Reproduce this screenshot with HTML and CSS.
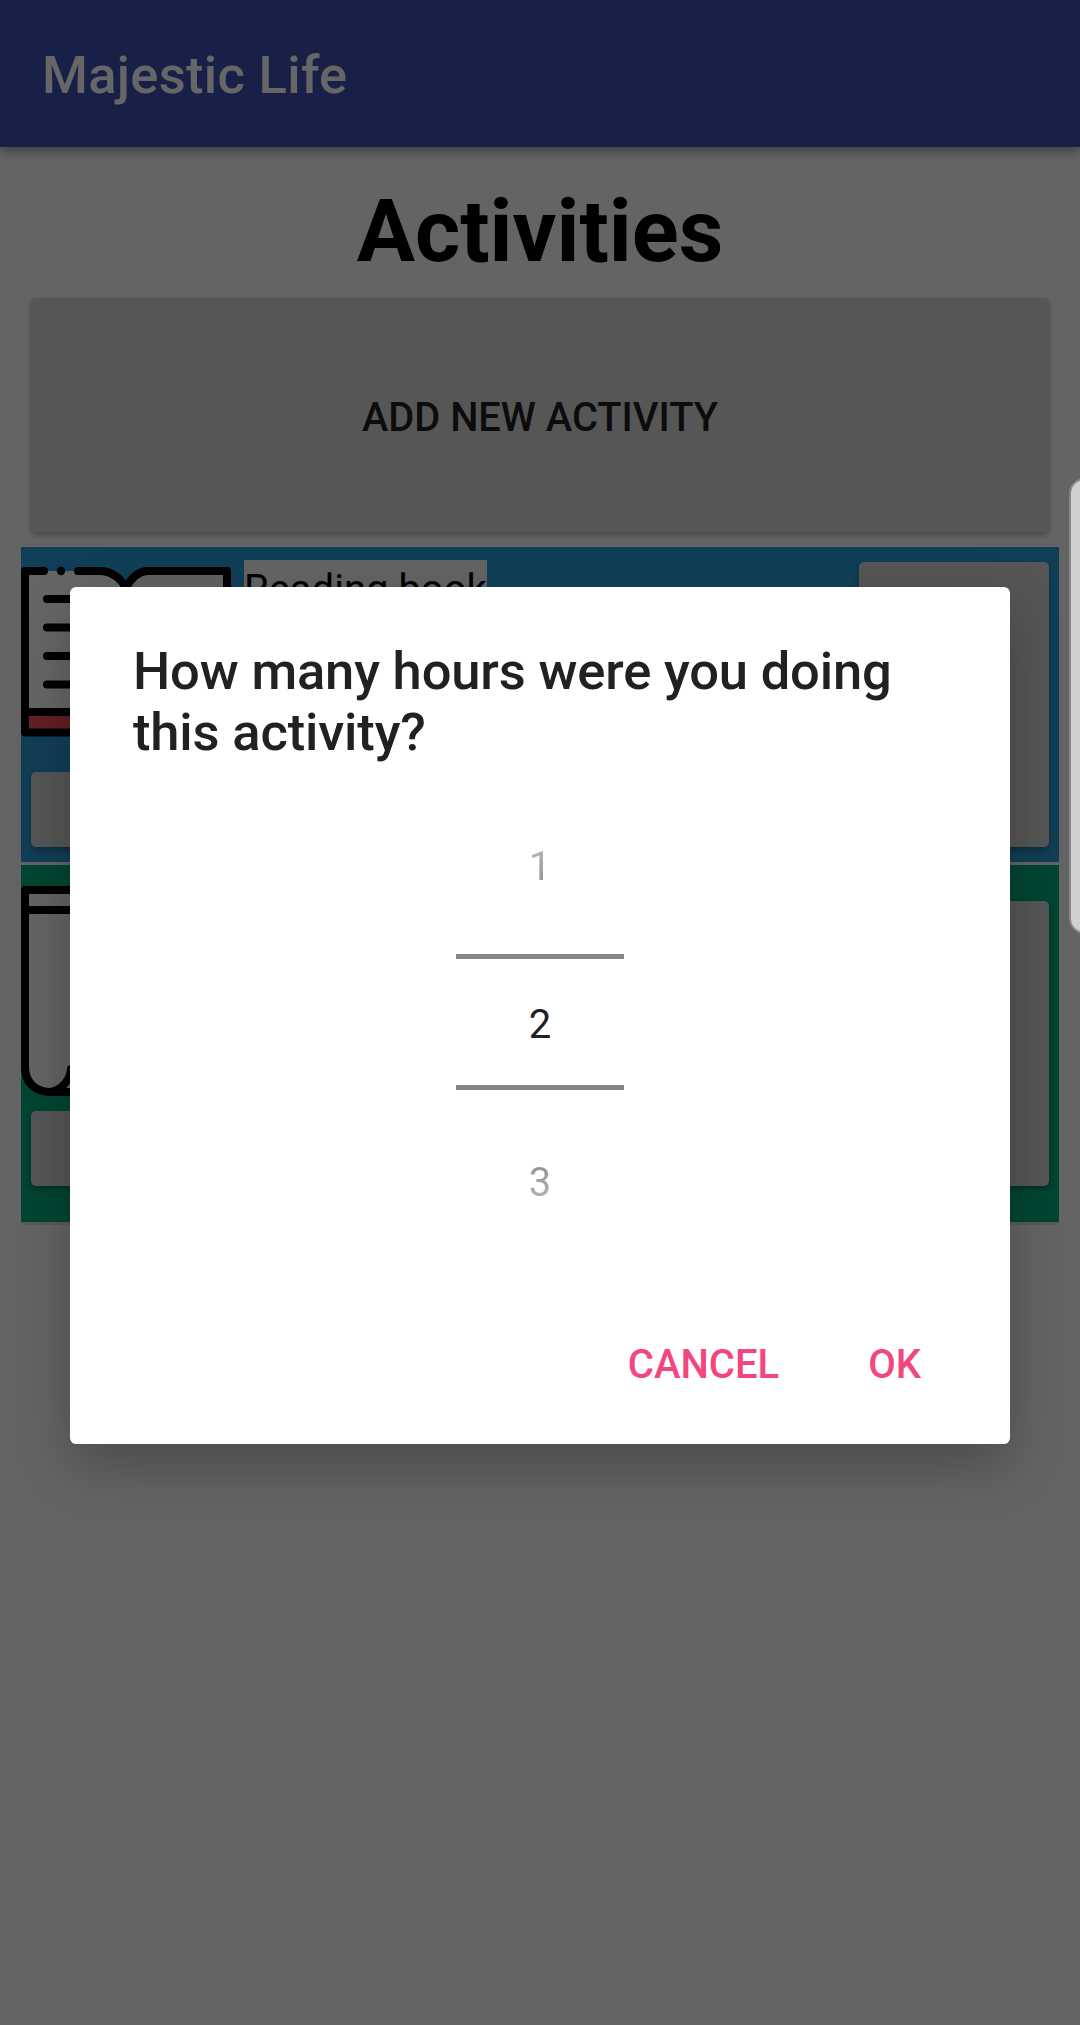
FILE: index.html
```html
<!DOCTYPE html>
<html lang="en">
<head>
<meta charset="utf-8">
<title>Majestic Life</title>
<link rel="stylesheet" href="styles.css">
</head>
<body>
<div class="screen">
  <header class="app-bar">Majestic Life</header>
  <main class="content">
    <h1 class="heading">Activities</h1>
    <button class="btn add-btn">ADD NEW ACTIVITY</button>
    <section class="activity activity-reading">
      <div class="activity-main">
        <div class="activity-info">
          <svg class="activity-icon" viewBox="0 0 210 210">
            <path d="M4 24H80Q96 25 106 39Q114 25 132 24H206V185H4Z" fill="#fff"/>
            <path d="M106 39Q114 25 132 24H206V167H106Z" fill="#f3f0f5"/>
            <path d="M4 167H206V185H4Z" fill="#f4525a"/>
            <g fill="none" stroke="#000" stroke-width="8" stroke-linecap="round" stroke-linejoin="round">
              <path d="M23 24H4V185.500H206V24H126Q113 25 105 41Q96 25 80 24H57M4 165H206M105 41V165"/>
              <path d="M26 52H80M26 80.500H80M26 109H80M26 137.500H80"/>
            </g>
            <circle cx="40" cy="24" r="4.200"/>
          </svg>
          <span class="activity-name">Reading book</span>
        </div>
        <button class="btn small-btn" aria-label="Details"></button>
      </div>
      <button class="btn side-btn" aria-label="Add hours"></button>
    </section>
    <section class="activity activity-writing">
      <div class="activity-main">
        <div class="activity-info">
          <svg class="activity-icon" viewBox="0 0 210 210">
            <path d="M4 4H170V206H27Q4 202 4 180Z" fill="#fafafa"/>
            <path d="M4 4H170V206H27Q4 203 4 180ZM4 24H170M50 183C49 196 38 206 27 206" fill="none" stroke="#000" stroke-width="8" stroke-linecap="round" stroke-linejoin="round"/>
          </svg>
        </div>
        <button class="btn small-btn" aria-label="Details"></button>
      </div>
      <button class="btn side-btn" aria-label="Add hours"></button>
    </section>
  </main>
  <div class="scrim">
    <div class="dialog" role="dialog">
      <h2 class="dialog-title">How many hours were you doing this activity?</h2>
      <div class="picker">
        <div class="option option-prev">1</div>
        <div class="option option-current">2</div>
        <div class="option option-next">3</div>
      </div>
      <div class="dialog-actions">
        <span>CANCEL</span>
        <span>OK</span>
      </div>
    </div>
  </div>
  <div class="edge-handle"></div>
</div>
</body>
</html>
```

FILE: styles.css
```css
* { box-sizing: border-box; }
body { margin: 0; font-family: Roboto, "Liberation Sans", sans-serif; }
.screen {
  position: relative;
  width: 1080px;
  height: 2025px;
  overflow: hidden;
  background: #fafafa;
}
.app-bar {
  position: relative;
  height: 147px;
  padding: 0 42px;
  background: #3f51b5;
  color: #fff;
  font-size: 52.5px;
  font-weight: 500;
  letter-spacing: .3px;
  line-height: 151px;
  box-shadow: 0 4px 10px rgba(0, 0, 0, .38);
}
.content { display: flex; flex-direction: column; padding: 21px 21px 0; }
.heading {
  margin: 0;
  height: 115px;
  color: #000;
  font-size: 86.8px;
  font-weight: 700;
  line-height: 126px;
  text-align: center;
}
.btn {
  display: block;
  border: 0;
  padding: 0;
  border-radius: 5px;
  background: #d6d7d7;
  box-shadow: 0 3px 6px rgba(0, 0, 0, .3);
  color: #1e1e1e;
  font: 500 39.8px Roboto, "Liberation Sans", sans-serif;
}
.add-btn { height: 234px; margin: 15px 10px; line-height: 240px; }
.activity { display: flex; }
.activity-reading { height: 315px; background: #2b9edb; }
.activity-writing {
  height: 357px;
  margin-top: 3px;
  padding: 21px 0;
  background: #00ad80;
  box-shadow: 0 3px 0 #e2e2e2;
}
.activity-main { flex: 1; display: flex; flex-direction: column; }
.activity-info { display: flex; align-items: flex-start; height: 210px; }
.activity-icon { width: 210px; height: 210px; flex: none; }
.activity-name {
  width: 243px;
  margin: 13px 0 0 13px;
  padding-top: 6px;
  background: #fafafa;
  color: #000;
  font-size: 40px;
  line-height: 48px;
  white-space: nowrap;
}
.small-btn { height: 75px; margin: 15px 10px; }
.side-btn { width: 190px; height: 285px; margin: 15px 10px; }
.scrim {
  position: absolute;
  inset: 0;
  padding: 587px 70px 0;
  background: rgba(0, 0, 0, .6);
}
.dialog {
  height: 857px;
  padding: 54px 63px 0;
  border-radius: 6px;
  background: #fff;
  box-shadow: 0 22px 56px rgba(0, 0, 0, .25);
}
.dialog-title {
  margin: 0;
  color: #212121;
  font-size: 52.5px;
  font-weight: 500;
  letter-spacing: -.16px;
  line-height: 61px;
}
.picker {
  width: 168px;
  margin: 24px auto 0;
  font-size: 40px;
  text-align: center;
}
.option-prev, .option-next { color: transparent; background-clip: text; -webkit-background-clip: text; }
.option-prev {
  height: 167px;
  line-height: 159px;
  background-image: linear-gradient(#f0f0f0, #585858 159px);
}
.option-current {
  height: 136px;
  padding-top: 6px;
  border: solid #868686;
  border-width: 5px 0;
  color: #212121;
  line-height: 120px;
}
.option-next {
  height: 185px;
  line-height: 185px;
  background-image: linear-gradient(#585858 13px, #f0f0f0 172px);
}
.dialog-actions {
  display: flex;
  justify-content: flex-end;
  gap: 89px;
  padding-right: 26px;
  color: #f3467f;
  font-size: 40px;
  font-weight: 500;
  line-height: 179px;
}
.edge-handle {
  position: absolute;
  top: 478px;
  right: -20px;
  width: 31px;
  height: 456px;
  border: 2px solid #868686;
  border-radius: 18px;
  background: #d0d0d0;
}
```
